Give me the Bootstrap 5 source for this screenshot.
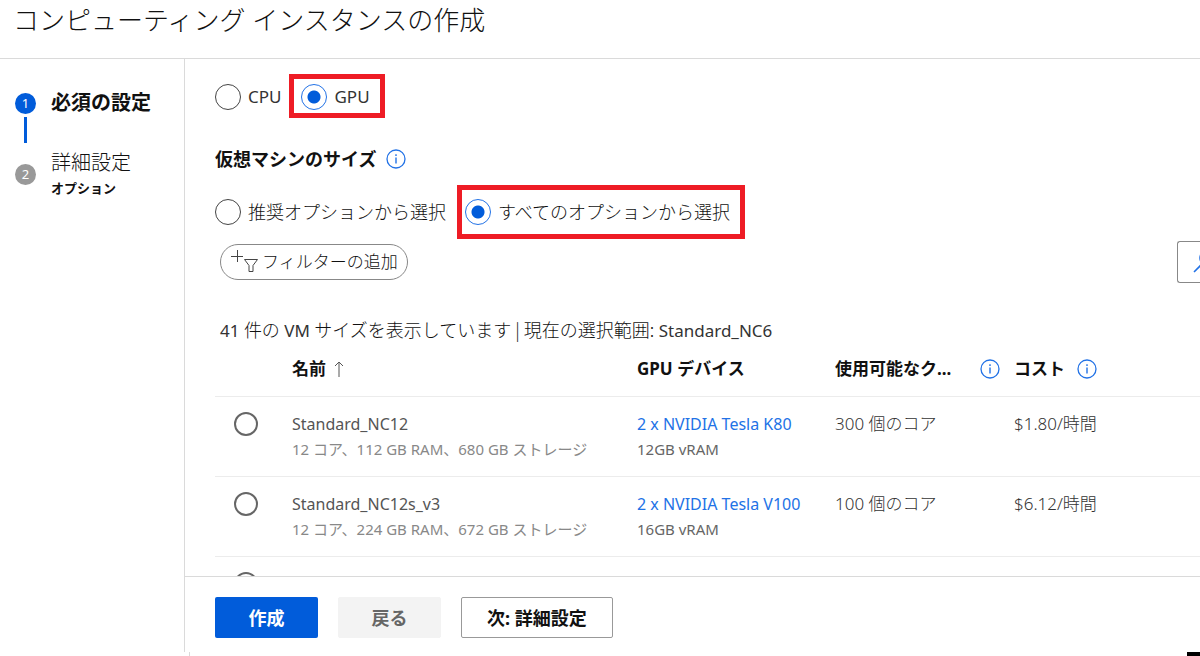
<!DOCTYPE html>
<html lang="ja">
<head>
<meta charset="utf-8">
<meta name="viewport" content="width=device-width, initial-scale=1">
<title>コンピューティング インスタンスの作成</title>
<link rel="stylesheet" href="https://cdn.jsdelivr.net/npm/bootstrap@5.3.0/dist/css/bootstrap.min.css">
<style>
  :root { --azure: #015cda; --link: #2272e6; --rule: #dadada; --soft: #ececec; --callout: #ee1c25; }
  body { font-family: "Noto Sans", "Noto Sans CJK JP", sans-serif; font-size: 16px; line-height: 24px; color: #333; background: #fff; }
  .page-head { height: 59px; border-bottom: 1px solid var(--rule); padding: 2px 13px; }
  .page-title { font-size: 26px; line-height: 36px; font-weight: 300; color: #111; }
  .steps { width: 185px; border-right: 1px solid var(--rule); padding: 30px 0 0 15px; }
  .step-dot { width: 21px; height: 21px; border-radius: 50%; background: #999; color: #fff; font-size: 13px; line-height: 21px; text-align: center; }
  .step-dot.on { background: var(--azure); }
  .step-line { width: 3px; height: 26px; margin: 0 0 6px 9px; background: var(--azure); }
  .step-now { font-size: 20px; font-weight: 700; color: #111; line-height: 28px; }
  .step-next { font-size: 20px; font-weight: 300; line-height: 28px; color: #111; }
  .step-note { font-size: 13px; font-weight: 700; line-height: 22px; color: #111; }
  .step-gap { gap: 15px; }
  .pane { padding-left: 30px; }
  .choice { font-size: 18px; font-weight: 300; gap: 7px; color: #111; }
  .choice.latin { font-size: 17px; font-weight: 400; color: #333; }
  .ring { appearance: none; flex: none; width: 26px; height: 26px; margin: 0; border: 1px solid #444; border-radius: 50%; background: #fff; }
  .ring:checked { border-color: var(--link); background: radial-gradient(circle, var(--azure) 6px, #fff 7px); }
  .ring.thin { width: 24px; height: 24px; border: 2px solid #666; display: block; }
  .callout { border: 5px solid var(--callout); }
  .pick-cpu { height: 44px; margin-top: 15px; }
  .pick-cpu .choice { padding-top: 2px; }
  .pick-cpu .callout { padding: 0 10px 0 7px; }
  .pick-size { height: 54px; }
  .pick-size .callout { margin-left: 11px; padding: 0 10px 0 3px; }
  .pane-title { font-size: 18px; font-weight: 700; line-height: 28px; color: #111; margin: 27px 0 12px; gap: 10px; }
  .filter-row { height: 42px; margin-top: 2px; }
  .btn-filter { height: 36px; border: 1px solid #888; border-radius: 18px; padding: 0 9px; margin: 3px 0 0 5px; font-size: 17px; font-weight: 300; line-height: 24px; color: #111; }
  .btn-find { width: 23px; height: 42px; padding: 0; border: 1px solid #888; border-right: 0; border-radius: 3px 0 0 3px; overflow: hidden; }
  .btn-find svg { display: block; margin-left: 15px; }
  .summary { height: 24px; margin: 34px 0 1px 5px; font-family: "Noto Sans CJK JP", sans-serif; font-size: 18px; font-weight: 300; color: #111; }
  .summary span { font-family: "Noto Sans", sans-serif; font-size: 17px; font-weight: 400; color: #333; }
  .vm-table { table-layout: fixed; width: 100%; }
  .vm-table th { height: 54px; padding: 0; vertical-align: middle; font-size: 17px; color: #111; border-bottom: 1px solid var(--soft); }
  .vm-table td { height: 80px; padding: 15px 0 0; vertical-align: top; font-size: 16px; line-height: 24px; color: #555; border-bottom: 1px solid var(--soft); }
  .vm-table .pick { padding-left: 19px; }
  .vm-table a { color: var(--link); text-decoration: none; }
  .vm-table .vm-amount { font-size: 17px; font-weight: 300; color: #333; }
  .vm-table .info-far { padding-right: 14px; }
  .vm-table .info-near { gap: 12px; }
  .vm-sub { font-size: 15px; font-weight: 400; line-height: 26px; color: #888; }
  .vm-table a + .vm-sub { color: #666; }
  .actions { height: 76px; border-top: 1px solid var(--rule); padding: 20px 0 0 30px; gap: 20px; }
  .actions .btn { height: 41px; min-width: 103px; border-radius: 2px; font-size: 18px; font-weight: 700; line-height: 24px; padding: 0 25px; }
  .btn-go { background: var(--azure); color: #fff; }
  .actions .btn-back { background: #f3f3f3; border-color: #f3f3f3; color: #666; opacity: 1; }
  .actions .btn-next { border: 1px solid #999; color: #111; }
  .edge { height: 4px; }
  .edge-tick { width: 190px; border-right: 1px solid var(--rule); }
  .edge-block { width: 13px; background: #000; }
</style>
</head>
<body class="vh-100 d-flex flex-column overflow-hidden">
<svg class="d-none">
  <symbol id="info" viewBox="0 0 20 20"><circle cx="10" cy="10" r="9" fill="none" stroke="#2272e6" stroke-width="1.3"/><path d="M10 8.5v6M10 5.2v1.7" stroke="#2272e6" stroke-width="1.4"/></symbol>
</svg>
<header class="page-head flex-shrink-0"><h1 class="page-title m-0">コンピューティング インスタンスの作成</h1></header>

<div class="d-flex flex-grow-1 overflow-hidden">
  <nav class="steps flex-shrink-0" aria-label="手順">
    <div class="d-flex align-items-center step-gap"><span class="step-dot on">1</span><span class="step-now">必須の設定</span></div>
    <div class="d-flex"><span class="step-line"></span></div>
    <div class="d-flex align-items-center step-gap">
      <span class="step-dot">2</span>
      <span class="d-flex flex-column"><span class="step-next">詳細設定</span><span class="step-note">オプション</span></span>
    </div>
  </nav>

  <div class="d-flex flex-column flex-grow-1 overflow-hidden">
    <main class="pane flex-grow-1 overflow-hidden">
      <div class="pick-cpu d-flex align-items-stretch">
        <label class="choice latin d-flex align-items-center"><input class="ring" type="radio" name="cpu">CPU</label>
        <div class="callout d-flex ms-2"><label class="choice latin d-flex align-items-center"><input class="ring" type="radio" name="cpu" checked>GPU</label></div>
      </div>

      <h2 class="pane-title d-flex align-items-center">仮想マシンのサイズ<svg width="20" height="20"><use href="#info"/></svg></h2>

      <div class="pick-size d-flex align-items-stretch">
        <label class="choice d-flex align-items-center"><input class="ring" type="radio" name="size">推奨オプションから選択</label>
        <div class="callout d-flex"><label class="choice d-flex align-items-center"><input class="ring" type="radio" name="size" checked>すべてのオプションから選択</label></div>
      </div>

      <div class="filter-row d-flex justify-content-between">
        <button class="btn btn-filter d-flex align-items-center" type="button">
          <svg width="32" height="26" fill="none" stroke="#444"><path d="M7.500 1v12M1 7.500h12M14.500 10.500h13l-4.500 6v6h-4v-6z"/></svg>フィルターの追加
        </button>
        <button class="btn btn-find" type="button" aria-label="検索"><svg width="24" height="40" fill="none" stroke="#2272e6" stroke-width="1.600"><path d="M1 30l8-8"/><circle cx="14" cy="16" r="7"/></svg></button>
      </div>

      <p class="summary"><span>41 </span>件の<span> VM </span>サイズを表示しています | 現在の選択範囲:<span> Standard_NC6</span></p>

      <table class="vm-table">
        <colgroup><col style="width:77px"><col style="width:345px"><col style="width:198px"><col style="width:179px"><col></colgroup>
        <thead><tr>
          <th></th>
          <th><span class="d-flex align-items-center">名前<svg class="ms-2" width="10" height="16" fill="none" stroke="#555"><path d="M5 16V1M1 5l4-4 4 4"/></svg></span></th>
          <th>GPU デバイス</th>
          <th><span class="info-far d-flex align-items-center justify-content-between">使用可能なク...<svg width="20" height="20"><use href="#info"/></svg></span></th>
          <th><span class="info-near d-flex align-items-center">コスト<svg width="20" height="20"><use href="#info"/></svg></span></th>
        </tr></thead>
        <tbody>
          <tr>
            <td class="pick"><input class="ring thin" type="radio" name="vm" id="vm1"></td>
            <td><label for="vm1">Standard_NC12</label><div class="vm-sub">12 コア、112 GB RAM、680 GB ストレージ</div></td>
            <td><a href="#">2 x NVIDIA Tesla K80</a><div class="vm-sub">12GB vRAM</div></td>
            <td class="vm-amount">300 個のコア</td><td class="vm-amount">$1.80/時間</td>
          </tr>
          <tr>
            <td class="pick"><input class="ring thin" type="radio" name="vm" id="vm2"></td>
            <td><label for="vm2">Standard_NC12s_v3</label><div class="vm-sub">12 コア、224 GB RAM、672 GB ストレージ</div></td>
            <td><a href="#">2 x NVIDIA Tesla V100</a><div class="vm-sub">16GB vRAM</div></td>
            <td class="vm-amount">100 個のコア</td><td class="vm-amount">$6.12/時間</td>
          </tr>
          <tr><td class="pick"><input class="ring thin" type="radio" name="vm" aria-label="VM"></td><td></td><td></td><td></td><td></td></tr>
        </tbody>
      </table>
    </main>
    <footer class="actions d-flex flex-shrink-0">
      <button class="btn btn-go" type="button">作成</button>
      <button class="btn btn-back" type="button" disabled>戻る</button>
      <button class="btn btn-next" type="button">次: 詳細設定</button>
    </footer>
  </div>
</div>
<div class="edge d-flex justify-content-between flex-shrink-0"><span class="edge-tick"></span><span class="edge-block"></span></div>
<script src="https://cdn.jsdelivr.net/npm/bootstrap@5.3.0/dist/js/bootstrap.bundle.min.js"></script>
</body>
</html>
